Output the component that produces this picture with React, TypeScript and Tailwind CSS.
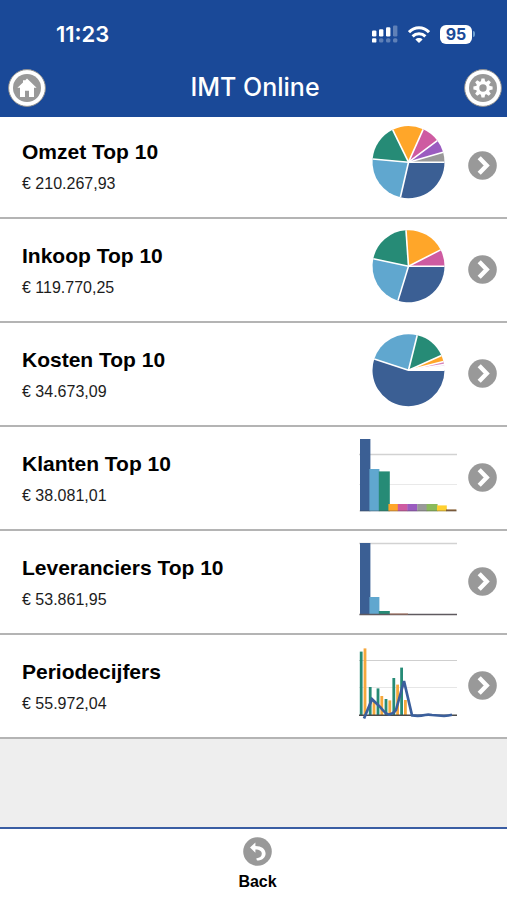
import type { ReactNode } from 'react'

const BLUE = '#3b5f94'
const SKY = '#60a7cf'
const GREEN = '#268b76'
const ORANGE = '#ffa629'
const PINK = '#ce5ba1'
const PURPLE = '#9b5cc0'
const GRAY = '#999999'
const LIME = '#8aba5b'
const YELLOW = '#ffd02f'
const BROWN = '#8a6238'

interface Slice {
  end: number
  color: string
}

interface Bar {
  x: number
  y: number
  w: number
  color: string
}

const omzet: Slice[] = [
  { end: 103, color: BLUE },
  { end: 185, color: SKY },
  { end: 244, color: GREEN },
  { end: 294, color: ORANGE },
  { end: 323, color: PINK },
  { end: 344, color: PURPLE },
  { end: 360, color: GRAY },
]

const inkoop: Slice[] = [
  { end: 107, color: BLUE },
  { end: 192, color: SKY },
  { end: 266, color: GREEN },
  { end: 333, color: ORANGE },
  { end: 360, color: PINK },
]

const kosten: Slice[] = [
  { end: 198, color: BLUE },
  { end: 284, color: SKY },
  { end: 336, color: GREEN },
  { end: 346, color: ORANGE },
  { end: 351, color: '#d884bb' },
  { end: 354, color: '#e5d5ef' },
  { end: 360, color: '#ffffff' },
]

const klanten: Bar[] = [
  { x: 2, y: 1, w: 10.4, color: BLUE },
  { x: 11.4, y: 31, w: 10, color: SKY },
  { x: 20.8, y: 33.4, w: 11, color: GREEN },
  { x: 30.4, y: 66, w: 9.6, color: ORANGE },
  { x: 39.8, y: 66, w: 10, color: PINK },
  { x: 49.4, y: 66, w: 10, color: PURPLE },
  { x: 59.2, y: 66, w: 10, color: GRAY },
  { x: 68.6, y: 66, w: 11, color: LIME },
  { x: 79, y: 67.4, w: 9.8, color: YELLOW },
  { x: 88, y: 71.4, w: 10.4, color: BROWN },
]

const leveranciers: Bar[] = [
  { x: 2, y: 1, w: 10.4, color: BLUE },
  { x: 11.4, y: 55, w: 10, color: SKY },
  { x: 20.8, y: 69, w: 11, color: GREEN },
]

const perioden: Bar[] = [
  { x: 1.8, y: 5.6, w: 2.8, color: GREEN },
  { x: 5.6, y: 2.4, w: 2.8, color: '#f6a83c' },
  { x: 10.8, y: 41, w: 2.8, color: GREEN },
  { x: 14.6, y: 55, w: 2.8, color: '#f6a83c' },
  { x: 18.6, y: 42.4, w: 2.8, color: GREEN },
  { x: 22.4, y: 50, w: 2.8, color: '#f6a83c' },
  { x: 26.6, y: 53, w: 2.8, color: GREEN },
  { x: 30.4, y: 54.4, w: 2.8, color: '#f6a83c' },
  { x: 34.4, y: 32, w: 2.8, color: GREEN },
  { x: 38.2, y: 38.6, w: 2.8, color: '#f6a83c' },
  { x: 42.2, y: 21.6, w: 2.8, color: GREEN },
  { x: 46, y: 54, w: 2.8, color: '#f6a83c' },
]

const items = [
  { title: 'Omzet Top 10', amount: '€ 210.267,93', chart: <PieChart slices={omzet} /> },
  { title: 'Inkoop Top 10', amount: '€ 119.770,25', chart: <PieChart slices={inkoop} /> },
  { title: 'Kosten Top 10', amount: '€ 34.673,09', chart: <PieChart slices={kosten} /> },
  { title: 'Klanten Top 10', amount: '€ 38.081,01', chart: <KlantenChart /> },
  { title: 'Leveranciers Top 10', amount: '€ 53.861,95', chart: <LeveranciersChart /> },
  { title: 'Periodecijfers', amount: '€ 55.972,04', chart: <PeriodenChart /> },
]

function App() {
  return (
    <div className="flex min-h-screen flex-col bg-[#eeeeee] font-['Liberation_Sans',sans-serif] text-black">
      <header className="relative z-10 bg-[#1a4998] pb-2 text-white">
        <StatusBar />
        <div className="flex items-center justify-between pr-[5px] pl-2">
          <RoundButton label="Home">
            <path d="M19 9.6 28.6 18.8H26V28H21V21.8H17V28H12V18.8H9.4L15 13.4V11.2H17V11.6Z" fill="#fff" />
          </RoundButton>
          <h1 className="pb-1 font-['Inter',sans-serif] text-[25px] leading-8 font-medium">IMT Online</h1>
          <RoundButton label="Instellingen">
            <g fill="#fff">
              {[0, 45, 90, 135, 180, 225, 270, 315].map((angle) => (
                <path key={angle} d="M16.8 13 17.5 9.4H20.5L21.2 13Z" transform={`rotate(${angle} 19 19)`} />
              ))}
            </g>
            <circle cx="19" cy="19" r="5.3" fill="none" stroke="#fff" strokeWidth="3.2" />
          </RoundButton>
        </div>
      </header>

      {/* the first row slides a little under the header */}
      <main className="-mt-0.5 grow">
        <ul>
          {items.map((item) => (
            <li key={item.title}>
              <a
                href="#"
                className="flex h-[104px] items-center border-b-2 border-[#b4b4b4] bg-white pr-[10px] pb-0.5 pl-[22px]"
              >
                <div className="grow pt-1.5">
                  <h2 className="text-[21px] leading-8 font-bold">{item.title}</h2>
                  <p className="text-base leading-8 text-[#1c1c1c]">{item.amount}</p>
                </div>
                {item.chart}
                <svg viewBox="0 0 29 29" className="ml-[10px] h-[29px] w-[29px] shrink-0">
                  <circle cx="14.5" cy="14.5" r="14.3" fill="#999" />
                  <path d="M11.2 6.8 18.7 14.5 11.2 22.2" fill="none" stroke="#fff" strokeWidth="4.4" />
                </svg>
              </a>
            </li>
          ))}
        </ul>
      </main>

      <footer className="flex justify-center border-t-2 border-[#3a5da3] bg-white pt-2 pb-1 pl-2">
        <button type="button" className="flex flex-col items-center gap-0.5 px-4">
          <svg viewBox="0 0 29 29" className="h-[29px] w-[29px]">
            <circle cx="14.5" cy="14.5" r="14.3" fill="#999" />
            <path d="M7 10.6 12.4 5.4V8.9C18.6 8.9 22.6 12 22.6 16.4 22.6 20.4 19.2 23.4 14 23.6L13.2 21.4C16.8 21.1 18.8 19.4 18.8 16.8 18.8 14.2 16.6 12.6 12.4 12.5V15.8Z" fill="#fff" />
          </svg>
          <span className="text-base leading-7 font-bold">Back</span>
        </button>
      </footer>
    </div>
  )
}

function StatusBar() {
  return (
    <div className="flex h-[68px] items-center justify-between pr-8 pl-14">
      <span className="font-['Inter',sans-serif] text-[22px] leading-7 font-semibold">11:23</span>
      <div className="flex items-center gap-[10px]">
        <svg viewBox="0 0 26 18" className="h-[18px] w-[26px]" fill="#fff">
          <rect x="0" y="5.4" width="4.4" height="6" rx="1.2" />
          <rect x="7" y="4.2" width="4.4" height="7.2" rx="1.2" />
          <rect x="14" y="2.2" width="4.4" height="9.2" rx="1.2" />
          <rect x="21" y="0.4" width="4.4" height="11" rx="1.2" opacity="0.3" />
          <rect x="0" y="13.2" width="4.4" height="4.4" rx="1.2" />
          <rect x="7" y="13.2" width="4.4" height="4.4" rx="1.6" opacity="0.3" />
          <rect x="14" y="13.2" width="4.4" height="4.4" rx="1.6" opacity="0.3" />
          <rect x="21" y="13.2" width="4.4" height="4.4" rx="1.6" opacity="0.3" />
        </svg>
        <svg viewBox="0 0 22 17" className="h-[17px] w-[22px]" fill="none" stroke="#fff" strokeWidth="3">
          <path d="M1 6.2C6.6 .4 15.4 .4 21 6.2" />
          <path d="M4.6 10.4C8.1 6.9 13.9 6.9 17.4 10.4" />
          <path d="M11 17 7.4 13.4C9.3 11.5 12.7 11.5 14.6 13.4Z" fill="#fff" stroke="none" />
        </svg>
        <div className="flex items-center gap-px">
          <span className="flex h-[19px] w-8 items-center justify-center rounded-md bg-white font-['Inter',sans-serif] text-base leading-none font-bold text-[#1a4998]">
            95
          </span>
          <span className="h-1.5 w-0.5 rounded-r-full bg-[#6b9fd0]" />
        </div>
      </div>
    </div>
  )
}

interface RoundButtonProps {
  label: string
  children: ReactNode
}

function RoundButton({ label, children }: RoundButtonProps) {
  return (
    <button type="button" aria-label={label} className="pt-px pb-0.5">
      <svg viewBox="0 0 38 38" className="h-[38px] w-[38px]">
        <circle cx="19" cy="19" r="18.4" fill="#fff" stroke="#8e8e8e" strokeWidth="1" />
        <circle cx="19" cy="19" r="14" fill="#999" />
        {children}
      </svg>
    </button>
  )
}

function Chart({ children }: { children: ReactNode }) {
  return (
    <svg viewBox="0 0 100 78" className="h-[78px] w-[100px] shrink-0">
      {children}
    </svg>
  )
}

function PieChart({ slices }: { slices: Slice[] }) {
  const cx = 50.5
  const cy = 36.2
  const r = 36
  const point = (deg: number) => {
    const rad = (deg * Math.PI) / 180
    return `${(cx + r * Math.cos(rad)).toFixed(2)} ${(cy + r * Math.sin(rad)).toFixed(2)}`
  }

  return (
    <Chart>
      {slices.map((slice, i) => {
        const start = i === 0 ? 0 : slices[i - 1].end
        const large = slice.end - start > 180 ? 1 : 0
        return (
          <path
            key={slice.end}
            d={`M${cx} ${cy}L${point(start)}A${r} ${r} 0 ${large} 1 ${point(slice.end)}Z`}
            fill={slice.color}
          />
        )
      })}
      {slices.map((slice) => (
        <path key={slice.end} d={`M${cx} ${cy}L${point(slice.end)}`} stroke="#fff" strokeWidth="1.6" />
      ))}
    </Chart>
  )
}

function Bars({ bars, bottom }: { bars: Bar[]; bottom: number }) {
  return (
    <>
      {bars.map((bar) => (
        <rect key={bar.x} x={bar.x} y={bar.y} width={bar.w} height={bottom - bar.y} fill={bar.color} />
      ))}
    </>
  )
}

function KlantenChart() {
  return (
    <Chart>
      <path d="M1 16.5H99" stroke="#d2d2d2" strokeWidth="1.4" />
      <path d="M1 46.5H99" stroke="#e9e9e9" />
      <Bars bars={klanten} bottom={73.2} />
      <path d="M1.6 72.9H98.6" stroke="#444" strokeWidth="0.8" opacity="0.5" />
    </Chart>
  )
}

function LeveranciersChart() {
  return (
    <Chart>
      <path d="M1 1.5H99" stroke="#d2d2d2" strokeWidth="1.4" />
      <Bars bars={leveranciers} bottom={73} />
      <path d="M1.4 72.5H99" stroke="#5f5a5f" strokeWidth="1.6" />
      <path d="M32 72H50" stroke="#a5705c" />
    </Chart>
  )
}

function PeriodenChart() {
  return (
    <Chart>
      <path d="M1 14.5H99" stroke="#cfcfcf" strokeWidth="1.2" />
      <path d="M1 41.5H99" stroke="#e6e6e6" />
      <Bars bars={perioden} bottom={69.4} />
      <path d="M1 69.3H99" stroke="#4a4a4a" strokeWidth="1.6" />
      <path
        d="M6 72.4 14 53.2 22 60.8Q28 68.6 31 68.6 35 68 38 64L46 35 54 69.4Q61 70.4 67 69 70 68.4 74 69L86 70Q91 69.6 94 68.8"
        fill="none"
        stroke="#3b5f9c"
        strokeWidth="2.7"
      />
    </Chart>
  )
}

export default App
